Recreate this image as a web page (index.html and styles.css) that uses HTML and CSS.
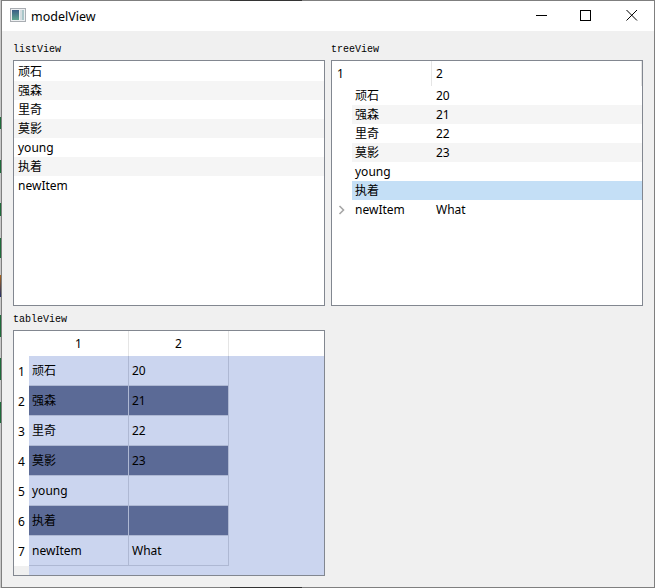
FILE: index.html
```html
<!DOCTYPE html>
<html lang="zh">
<head>
<meta charset="utf-8">
<title>modelView</title>
<link rel="stylesheet" href="styles.css">
</head>
<body>
<div class="window">
  <header class="titlebar">
    <svg class="app-icon" width="16" height="14" viewBox="0 0 16 14">
      <defs><linearGradient id="iconfill" x1="0" y1="0" x2="0" y2="1"><stop offset="0" stop-color="#3a5f86"/><stop offset="1" stop-color="#5fa58f"/></linearGradient></defs>
      <rect x="0.5" y="0.5" width="15" height="13" fill="#eef0f2" stroke="#a9adb2"/>
      <rect x="2" y="2" width="7" height="10" fill="url(#iconfill)"/>
      <rect x="10" y="2" width="2" height="10" fill="#d5dde0"/>
      <rect x="12" y="2" width="2" height="10" fill="#a9c6c9"/>
    </svg>
    <span class="app-title">modelView</span>
    <div class="controls">
      <svg class="ctl" width="46" height="30" viewBox="0 0 46 30"><path d="M20 14.5h11" stroke="#000" fill="none"/></svg>
      <svg class="ctl" width="46" height="30" viewBox="0 0 46 30"><rect x="18.5" y="9.5" width="10" height="10" stroke="#000" fill="none"/></svg>
      <svg class="ctl" width="46" height="30" viewBox="0 0 46 30"><path d="M18.5 9l10.5 10.5M29 9L18.5 19.5" stroke="#000" fill="none"/></svg>
    </div>
  </header>
  <main class="client">
    <section class="pane">
      <div class="caption">listView</div>
      <div class="frame list">
        <div class="row">顽石</div>
        <div class="row alt">强森</div>
        <div class="row">里奇</div>
        <div class="row alt">莫影</div>
        <div class="row">young</div>
        <div class="row alt">执着</div>
        <div class="row">newItem</div>
      </div>
    </section>
    <section class="pane">
      <div class="caption">treeView</div>
      <div class="frame tree">
        <div class="tree-head"><div class="th first">1</div><div class="th second">2</div></div>
        <div class="tr"><span class="c1">顽石</span><span class="c2">20</span></div>
        <div class="tr alt"><span class="c1">强森</span><span class="c2">21</span></div>
        <div class="tr"><span class="c1">里奇</span><span class="c2">22</span></div>
        <div class="tr alt"><span class="c1">莫影</span><span class="c2">23</span></div>
        <div class="tr"><span class="c1">young</span><span class="c2"></span></div>
        <div class="tr sel"><span class="c1">执着</span><span class="c2"></span></div>
        <div class="tr"><svg class="arrow" width="8" height="10" viewBox="0 0 8 10"><path d="M1.5 1l4 4-4 4" fill="none" stroke="#a6a6a6" stroke-width="1.6"/></svg><span class="c1">newItem</span><span class="c2">What</span></div>
      </div>
    </section>
    <section class="pane">
      <div class="caption">tableView</div>
      <div class="frame table">
        <div class="corner"></div><div class="hh">1</div><div class="hh">2</div><div class="hh rest"></div>
        <div class="vh">1</div><div class="cell">顽石</div><div class="cell">20</div><div class="blank"></div>
        <div class="vh">2</div><div class="cell dark">强森</div><div class="cell dark">21</div><div class="blank"></div>
        <div class="vh">3</div><div class="cell">里奇</div><div class="cell">22</div><div class="blank"></div>
        <div class="vh">4</div><div class="cell dark">莫影</div><div class="cell dark">23</div><div class="blank"></div>
        <div class="vh">5</div><div class="cell">young</div><div class="cell"></div><div class="blank"></div>
        <div class="vh">6</div><div class="cell dark">执着</div><div class="cell dark"></div><div class="blank"></div>
        <div class="vh">7</div><div class="cell">newItem</div><div class="cell">What</div><div class="blank"></div>
        <div class="vh-end"></div><div class="blank wide"></div>
      </div>
    </section>
  </main>
</div>
</body>
</html>
```
FILE: styles.css
```css
* { box-sizing: border-box; }
html, body { margin: 0; padding: 0; }
body {
  width: 655px;
  height: 588px;
  overflow: hidden;
  background: linear-gradient(to bottom,
    #c8c8c8 117px, #1f6b3a 117px, #1f6b3a 129px,
    #c8c8c8 129px, #c8c8c8 160px, #1f6b3a 160px, #1f6b3a 173px,
    #c8c8c8 173px, #c8c8c8 203px, #1f6b3a 203px, #1f6b3a 216px,
    #c8c8c8 216px, #c8c8c8 238px, #1f6b3a 238px, #1f6b3a 258px,
    #c8c8c8 258px, #c8c8c8 275px, #a8641c 275px, #22306a 297px,
    #c8c8c8 297px, #c8c8c8 315px, #1f6b3a 315px, #1f6b3a 337px,
    #c8c8c8 337px, #c8c8c8 358px, #1f6b3a 358px, #1f6b3a 380px,
    #c8c8c8 380px, #c8c8c8 402px, #1f6b3a 402px, #1f6b3a 423px,
    #c8c8c8 423px);
  padding-left: 1px;
  font: 12px/19px "Noto Sans", "Noto Sans CJK SC", sans-serif;
  color: #000;
}
.window {
  width: 654px;
  height: 588px;
  border: 1px solid #7f7f7f;
  display: flex;
  flex-direction: column;
  background: #f0f0f0;
  position: relative;
}
.window::before,
.window::after {
  content: "";
  position: absolute;
  left: 228px;
  width: 72px;
  height: 1px;
  background: #333;
}
.window::before { top: -1px; }
.window::after { bottom: -1px; }
.titlebar {
  height: 30px;
  flex: none;
  background: #fff;
  display: flex;
  align-items: center;
  padding-left: 8px;
}
.app-icon { flex: none; margin: 0 5px 2px 0; }
.app-title { font-size: 12.5px; }
.controls { margin-left: auto; display: flex; }
.ctl { display: block; }
.client {
  flex: 1;
  display: grid;
  grid-template-columns: 312px 312px;
  grid-template-rows: 270px 265px;
  column-gap: 6px;
  row-gap: 0;
  padding: 10px 0 0 11px;
}
.caption {
  font: 10px/18px "Liberation Mono", monospace;
  height: 19px;
}
.frame {
  border: 1px solid #828790;
  background: #fff;
  height: 246px;
  overflow: hidden;
}
.list { padding-top: 1px; }
.row { height: 19px; padding-left: 4px; }
.alt { background: #f5f5f5; }
.tree-head { display: flex; height: 25px; line-height: 26px; }
.th { padding-left: 5px; }
.first { width: 100px; border-right: 1px solid #e5e5e5; }
.second { flex: 1; padding-left: 4px; border-right: 1px solid #e5e5e5; }
.tr { height: 19px; margin-left: 20px; display: flex; padding-left: 3px; position: relative; }
.c1 { width: 81px; flex: none; }
.sel { background: #c4dff6; }
.arrow { position: absolute; left: -14px; top: 5px; }
.table {
  display: grid;
  grid-template-columns: 15px 100px 100px 1fr;
  grid-template-rows: 25px repeat(7, 30px) 1fr;
  background: #cbd5ef;
}
.corner { background: #fff; }
.hh {
  background: #fff;
  text-align: center;
  line-height: 26px;
  border-right: 1px solid #e5e5e5;
}
.rest { border-right: 0; }
.vh { background: #fff; text-align: center; line-height: 31px; }
.vh-end { background: #f0f0f0; }
.cell {
  padding-left: 3px;
  line-height: 29px;
  border-right: 1px solid #aeb8d3;
  border-bottom: 1px solid #aeb8d3;
}
.dark { background: #5b6a96; }
.wide { grid-column: 2 / 5; }
```
